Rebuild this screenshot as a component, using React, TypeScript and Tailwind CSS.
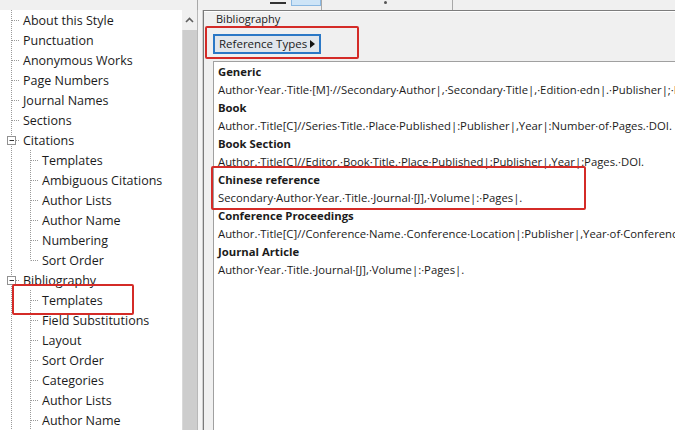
import React from 'react';

type Node = { label: string; level: 1 | 2; kind: 'leaf' | 'open' | 'last' };

const tree: Node[] = [
  { label: 'About this Style', level: 1, kind: 'leaf' },
  { label: 'Punctuation', level: 1, kind: 'leaf' },
  { label: 'Anonymous Works', level: 1, kind: 'leaf' },
  { label: 'Page Numbers', level: 1, kind: 'leaf' },
  { label: 'Journal Names', level: 1, kind: 'leaf' },
  { label: 'Sections', level: 1, kind: 'leaf' },
  { label: 'Citations', level: 1, kind: 'open' },
  { label: 'Templates', level: 2, kind: 'leaf' },
  { label: 'Ambiguous Citations', level: 2, kind: 'leaf' },
  { label: 'Author Lists', level: 2, kind: 'leaf' },
  { label: 'Author Name', level: 2, kind: 'leaf' },
  { label: 'Numbering', level: 2, kind: 'leaf' },
  { label: 'Sort Order', level: 2, kind: 'last' },
  { label: 'Bibliography', level: 1, kind: 'open' },
  { label: 'Templates', level: 2, kind: 'leaf' },
  { label: 'Field Substitutions', level: 2, kind: 'leaf' },
  { label: 'Layout', level: 2, kind: 'leaf' },
  { label: 'Sort Order', level: 2, kind: 'leaf' },
  { label: 'Categories', level: 2, kind: 'leaf' },
  { label: 'Author Lists', level: 2, kind: 'leaf' },
  { label: 'Author Name', level: 2, kind: 'leaf' },
];

const templates = [
  ['Generic', 'Author·Year.·Title·[M]·//Secondary·Author|,·Secondary·Title|,·Edition·edn|.·Publisher|;·Place·Published|.'],
  ['Book', 'Author.·Title[C]//Series·Title.·Place·Published|:Publisher|,Year|:Number·of·Pages.·DOI.'],
  ['Book Section', 'Author.·Title[C]//Editor.·Book·Title.·Place·Published|:Publisher|,Year|:Pages.·DOI.'],
  ['Chinese reference', 'Secondary·Author·Year.·Title.·Journal·[J],·Volume|:·Pages|.'],
  ['Conference Proceedings', 'Author.·Title[C]//Conference·Name.·Conference·Location|:Publisher|,Year·of·Conference.'],
  ['Journal Article', 'Author·Year.·Title.·Journal·[J],·Volume|:·Pages|.'],
];

// dotted tree connectors for one row (drawing)
function Connector({ node }: { node: Node }) {
  const dot = { stroke: '#9a9a9a', strokeWidth: 1, strokeDasharray: '1 1' };
  return (
    <svg width={node.level === 1 ? 22 : 41} height={20} className="shrink-0">
      <line x1={11.5} y1={0} x2={11.5} y2={20} {...dot} />
      {node.level === 1 && node.kind !== 'open' && <line x1={12} y1={10.5} x2={20} y2={10.5} {...dot} />}
      {node.level === 1 && node.kind === 'open' && (
        <g>
          <rect x={7.5} y={6.5} width={8} height={8} fill="#fff" stroke="#919191" />
          <line x1={9.5} y1={10.5} x2={14} y2={10.5} stroke="#333" />
          <line x1={16} y1={10.5} x2={20} y2={10.5} {...dot} />
        </g>
      )}
      {node.level === 2 && (
        <g>
          <line x1={30.5} y1={0} x2={30.5} y2={node.kind === 'last' ? 10.5 : 20} {...dot} />
          <line x1={31} y1={10.5} x2={39} y2={10.5} {...dot} />
        </g>
      )}
    </svg>
  );
}

export default function App() {
  return (
    <div className="relative w-[675px] h-[430px] overflow-hidden bg-[#f0f0f0] font-['Open_Sans','Noto_Sans',sans-serif] text-[#1b1b1b] flex flex-col">
      {/* toolbar remnants */}
      <div className="h-[10px] shrink-0 flex items-start">
        <div className="w-[197px] shrink-0" />
        <div className="w-px h-full bg-[#a8a8a8]" />
        <div className="w-[72px]" />
        <div className="w-[16px] h-[2px] mt-[2px] bg-[#333]" />
        <div className="w-[5px]" />
        <div className="w-[30px] h-[6px] bg-[#cde4f7] border border-[#8ab8e2] border-t-0" />
        <div className="w-px h-full bg-[#a8a8a8]" />
        <div className="w-[62px]" />
        <div className="w-[3px] h-[3px] mt-[1px] rounded-full bg-[#555]" />
        <div className="w-[65px]" />
        <div className="w-px h-full bg-[#a8a8a8]" />
      </div>

      <div className="flex flex-1 min-h-0">
        {/* tree */}
        <div className="w-[182px] shrink-0 bg-white flex flex-col text-[12.5px] leading-[20px]">
          {tree.map((n, i) => (
            <div key={i} className="flex h-[20px] items-center whitespace-nowrap">
              <Connector node={n} />
              <span className="pl-[1px] pt-[2px]">{n.label}</span>
            </div>
          ))}
        </div>

        {/* scrollbar */}
        <div className="w-[15px] shrink-0 flex flex-col bg-[#f0f0f0]">
          <div className="h-[20px] flex items-center justify-center">
            <svg width="9" height="6" viewBox="0 0 9 6">
              <path d="M1 5 L4.5 1.5 L8 5" fill="none" stroke="#606060" strokeWidth="1.6" />
            </svg>
          </div>
          <div className="flex-1 bg-[#cdcdcd] border-l border-[#d9d9d9]" />
        </div>

        {/* splitter */}
        <div className="w-[6px] shrink-0 bg-[#f4f4f4] border-l border-[#b8b8b8] border-r border-r-[#d0d0d0]" />

        {/* right panel */}
        <div className="flex-1 min-w-0 flex flex-col border-l border-[#7a7a7a] border-t border-t-[#7d7d7d] bg-[#f0f0f0]">
          <div className="h-px bg-white" />
          <div className="pl-[12px] text-[11px] leading-[14px]">Bibliography</div>
          <div className="pl-[9px] pt-[8px] pb-[7px]">
            <button className="h-[20px] px-[4px] flex items-center gap-[3px] text-[11.5px] bg-[#e1e6ec] border-2 border-[#2b78c6]">
              Reference Types
              <svg width="5" height="8" viewBox="0 0 5 8"><path d="M0 0 L5 4 L0 8 Z" fill="#111" /></svg>
            </button>
          </div>
          <div className="flex-1 ml-[9px] bg-white border-l border-t border-[#a0a0a0] pt-[1px] pl-[4px] text-[11.3px] leading-[18px] overflow-hidden">
            {templates.map(([title, body]) => (
              <div key={title} className="whitespace-nowrap">
                <div className="font-bold">{title}</div>
                <div>{body}</div>
              </div>
            ))}
          </div>
        </div>
      </div>

      {/* red annotation boxes */}
      <div className="absolute left-[205px] top-[26px] w-[154px] h-[33px] border-2 border-[#d42b27] rounded-[2px]" />
      <div className="absolute left-[211px] top-[166px] w-[375px] h-[44px] border-2 border-[#d42b27] rounded-[2px]" />
      <div className="absolute left-[12px] top-[284px] w-[122px] h-[31px] border-2 border-[#d42b27] rounded-[2px]" />
    </div>
  );
}
